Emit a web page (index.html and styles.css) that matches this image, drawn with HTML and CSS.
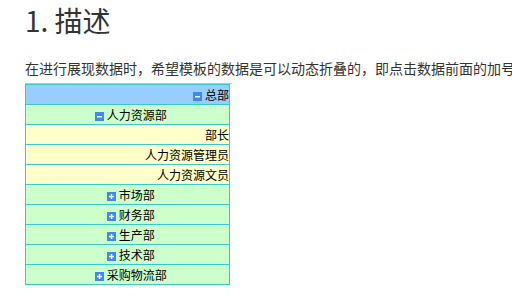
FILE: index.html
```html
<!DOCTYPE html>
<html lang="zh">
<head>
<meta charset="utf-8">
<link rel="stylesheet" href="styles.css">
</head>
<body>
<h1 class="title">1. 描述</h1>
<p class="desc">在进行展现数据时，希望模板的数据是可以动态折叠的，即点击数据前面的加号，可以展开或折叠数据。</p>
<div class="tree-wrap">
<table class="tree">
<tr class="lv0"><td class="right"><svg class="ic" viewBox="0 0 9 9"><rect width="9" height="9" fill="#3d8af5"/><rect x="2" y="4" width="5" height="1.5" fill="#fff"/></svg> 总部</td></tr>
<tr class="lv1"><td class="center"><svg class="ic" viewBox="0 0 9 9"><rect width="9" height="9" fill="#3d8af5"/><rect x="2" y="4" width="5" height="1.5" fill="#fff"/></svg> 人力资源部</td></tr>
<tr class="lv2"><td class="right">部长</td></tr>
<tr class="lv2"><td class="right">人力资源管理员</td></tr>
<tr class="lv2"><td class="right">人力资源文员</td></tr>
<tr class="lv1"><td class="center"><svg class="ic" viewBox="0 0 9 9"><rect width="9" height="9" fill="#3d8af5"/><rect x="2" y="3.8" width="5" height="1.5" fill="#fff"/><rect x="3.8" y="2" width="1.5" height="5" fill="#fff"/></svg> 市场部</td></tr>
<tr class="lv1"><td class="center"><svg class="ic" viewBox="0 0 9 9"><rect width="9" height="9" fill="#3d8af5"/><rect x="2" y="3.8" width="5" height="1.5" fill="#fff"/><rect x="3.8" y="2" width="1.5" height="5" fill="#fff"/></svg> 财务部</td></tr>
<tr class="lv1"><td class="center"><svg class="ic" viewBox="0 0 9 9"><rect width="9" height="9" fill="#3d8af5"/><rect x="2" y="3.8" width="5" height="1.5" fill="#fff"/><rect x="3.8" y="2" width="1.5" height="5" fill="#fff"/></svg> 生产部</td></tr>
<tr class="lv1"><td class="center"><svg class="ic" viewBox="0 0 9 9"><rect width="9" height="9" fill="#3d8af5"/><rect x="2" y="3.8" width="5" height="1.5" fill="#fff"/><rect x="3.8" y="2" width="1.5" height="5" fill="#fff"/></svg> 技术部</td></tr>
<tr class="lv1"><td class="center"><svg class="ic" viewBox="0 0 9 9"><rect width="9" height="9" fill="#3d8af5"/><rect x="2" y="3.8" width="5" height="1.5" fill="#fff"/><rect x="3.8" y="2" width="1.5" height="5" fill="#fff"/></svg> 采购物流部</td></tr>
</table>
</div>
</body>
</html>
```
FILE: styles.css
```css
html, body {
  margin: 0;
  padding: 0;
  background: #fff;
}
body {
  padding-left: 25px;
  font-family: "Noto Sans CJK SC", "Noto Sans", sans-serif;
  color: #333;
  overflow: hidden;
}
.title {
  margin: 0;
  font-size: 28px;
  line-height: 40px;
  font-weight: normal;
  color: #333;
}
.desc {
  margin: 18px 0 0;
  font-size: 14px;
  line-height: 20px;
  white-space: nowrap;
  overflow: hidden;
  color: #333;
}
.tree-wrap {
  margin-top: 5px;
  width: 207px;
  border-top: 1px solid #c4c4c4;
}
.tree {
  width: 205px;
  border-collapse: collapse;
  font-size: 12px;
  color: #000;
}
.tree td {
  border: 1px solid #3ccac8;
  height: 19px;
  padding: 0;
  line-height: 19px;
  white-space: nowrap;
}
.tree td.right {
  text-align: right;
}
.tree td.center {
  text-align: center;
  padding-left: 7px;
}
.lv0 td { background: #99ccff; }
.lv1 td { background: #ccffcc; }
.lv2 td { background: #ffffcc; }
.ic {
  width: 9px;
  height: 9px;
  vertical-align: -1px;
}
```
